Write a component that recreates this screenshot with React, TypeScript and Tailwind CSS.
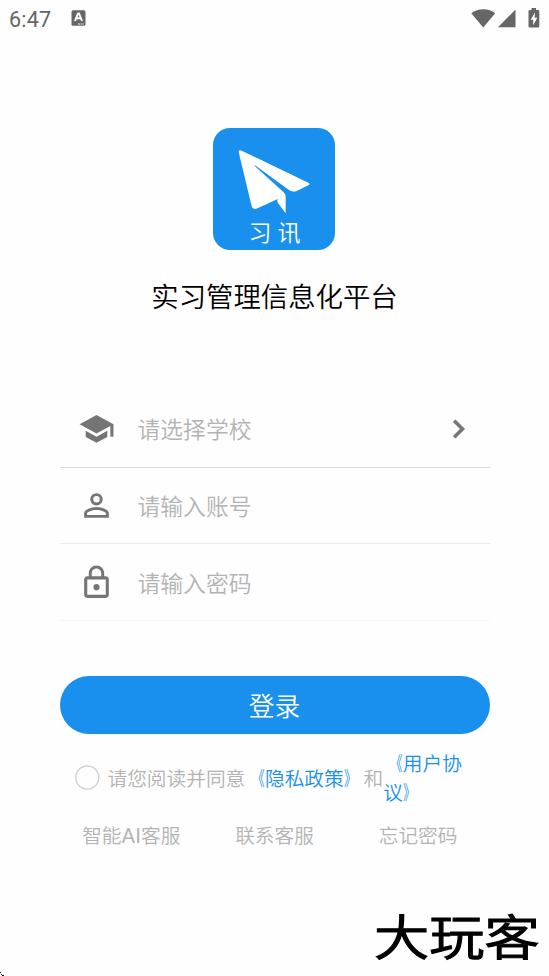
import type { ReactNode } from "react";

function StatusBar() {
  return (
    <header className="flex h-9 items-center pl-[9px] pr-[9px] text-[#666]">
      <span className="w-[62px] pt-[3px] font-['Roboto',sans-serif] text-[21.5px] font-normal leading-none tracking-[0.2px]">6:47</span>
      <svg className="h-4 w-[15px]" viewBox="0 0 15 16">
        <rect x="0.5" y="0.3" width="14" height="15.5" rx="1.6" fill="#666" />
        <path d="M4 11 7 3.5h1L11 11M5.3 8.3h4.4" fill="none" stroke="#fff" strokeWidth="1.9" />
        <path d="M7 14h6" stroke="#fff" strokeWidth="0.9" strokeDasharray="2 .6" />
      </svg>
      <div className="ml-auto flex items-center">
        <svg className="h-[20px] w-[25px]" viewBox="0 0 25 20" fill="#666">
          <path d="M.3 5.2C7-.1 18-.1 24.2 5.2L12.2 19.5Z" />
        </svg>
        <svg className="ml-[2px] h-[20px] w-[18px]" viewBox="0 0 18 20" fill="#666">
          <path d="M0 19.3 17.5 1.5v17.8Z" />
        </svg>
        <svg className="ml-[12px] h-[20px] w-[12px]" viewBox="0 0 12 20" fill="#666">
          <path d="M3.5 0h4.6v2H10a1.3 1.3 0 0 1 1.3 1.3v15A1.3 1.3 0 0 1 10 19.6H1.8a1.3 1.3 0 0 1-1.3-1.3v-15A1.3 1.3 0 0 1 1.8 2h1.7Z" />
          <path d="M7 4.6 2.7 11.8h2.5v5.4L9.3 9.8H6.7Z" fill="#fff" />
        </svg>
      </div>
    </header>
  );
}

function Logo() {
  return (
    <div className="relative ml-[213.4px] mt-[92px] h-[122px] w-[122px] rounded-[17px] bg-[#1990ee]">
      <svg className="h-[122px] w-[122px]" viewBox="28 24 366 366" fill="#fff">
        <path d="M105 96q0-8 9-4L314 188q7 4 0 8L279 213q-11 4-22-2L156 137q-6-4-2 2L240 217q6 6 6 15v48L223 249q-5-7 1-13L158 266q-11 4-14-7Z" />
      </svg>
      <div className="absolute inset-x-0 top-[92px] flex justify-center gap-[6px] text-[23px] leading-[23px] text-white">
        <span>习</span>
        <span>讯</span>
      </div>
    </div>
  );
}

function Field({ icon, text, border, trailing }: { icon: ReactNode; text: string; border: string; trailing?: ReactNode }) {
  return (
    <div className={`flex h-[76.7px] items-center border-b pl-[18px] pr-[13px] ${border}`}>
      <div className="flex w-[37px] justify-center">{icon}</div>
      <span className="ml-[23px] pt-[2px] text-[22.8px] leading-none text-[#b3b3b3]">{text}</span>
      <span className="ml-auto">{trailing}</span>
    </div>
  );
}

function Open() {
  return <span className="inline-block origin-right scale-x-[0.64]">《</span>;
}

function Close() {
  return <span className="inline-block origin-left scale-x-[0.64]">》</span>;
}

export default function App() {
  return (
    <main className="relative flex h-[976px] w-[549px] flex-col overflow-hidden bg-[#fefefe] font-['Noto_Sans_CJK_SC_DemiLight','Noto_Sans_CJK_SC',sans-serif] font-[350]">
      <StatusBar />
      <Logo />
      <h1 className="mt-[25px] text-center text-[27.4px] leading-10 text-black">实习管理信息化平台</h1>
      <form className="ml-[59.5px] mt-[76px] w-[430px]">
        <Field
          text="请选择学校"
          border="border-[#dadada]"
          icon={
            <svg className="h-[37px] w-[37px]" viewBox="0 -0.3 24 24" fill="#757575">
              <path d="M5 13.18v4L12 21l7-3.82v-4L12 17l-7-3.82zM12 3 1 9l11 6 9-4.91V17h2V9L12 3z" />
            </svg>
          }
          trailing={
            <svg className="h-[37px] w-[37px]" viewBox="0 -0.3 24 24" fill="#757575" stroke="#757575" strokeWidth="0.4">
              <path d="M10 6 8.59 7.41 13.17 12l-4.58 4.59L10 18l6-6z" />
            </svg>
          }
        />
        <Field
          text="请输入账号"
          border="border-[#ebebeb]"
          icon={
            <svg className="h-[37px] w-[37px]" viewBox="0 0 24 24" fill="#757575">
              <path d="M12 5.9a2.1 2.1 0 1 1 0 4.2 2.1 2.1 0 0 1 0-4.2m0 9c2.97 0 6.1 1.46 6.1 2.1v1.1H5.9V17c0-.64 3.13-2.1 6.1-2.1M12 4C9.79 4 8 5.79 8 8s1.79 4 4 4 4-1.79 4-4-1.79-4-4-4zm0 9c-2.67 0-8 1.34-8 4v3h16v-3c0-2.66-5.33-4-8-4z" />
            </svg>
          }
        />
        <Field
          text="请输入密码"
          border="border-[#f4f4f4]"
          icon={
            <svg className="h-[37px] w-[37px]" viewBox="0 0 24 24" fill="#757575">
              <path d="M12 17a2 2 0 1 0 0-4 2 2 0 0 0 0 4zm6-9h-1V6c0-2.76-2.24-5-5-5S7 3.24 7 6v2H6c-1.1 0-2 .9-2 2v10c0 1.1.9 2 2 2h12c1.1 0 2-.9 2-2V10c0-1.1-.9-2-2-2zM8.9 6c0-1.71 1.39-3.1 3.1-3.1s3.1 1.39 3.1 3.1v2H8.9V6zM18 20H6V10h12v10z" />
            </svg>
          }
        />
        <button type="button" className="mt-[55px] flex h-[58px] w-full items-center justify-center rounded-full bg-[#1990ee] text-[25.7px] leading-none text-white">
          登录
        </button>
        <div className="mt-[14px] flex h-[58px] items-center pl-[15px] text-[19.7px] leading-[29px] text-[#b3b3b3]">
          <svg className="h-[25px] w-[25px] shrink-0" viewBox="0 0 25 25">
            <circle cx="12.3" cy="12.5" r="11.5" fill="none" stroke="#d0d0d0" strokeWidth="1.4" />
          </svg>
          <span className="ml-[8px] whitespace-nowrap">请您阅读并同意</span>
          <a className="whitespace-nowrap text-[#1990ee]"><Open />隐私政策<Close /></a>
          <span>和</span>
          <a className="w-[85px] text-[#1990ee]"><Open />用户协<br />议<Close /></a>
        </div>
        <nav className="mt-[14px] flex justify-between pl-[22.7px] pr-[32px] text-[19.7px] leading-[29px] text-[#b3b3b3]">
          <a>智能<span className="font-['Roboto'] text-[21px] font-normal">AI</span>客服</a>
          <a className="-ml-[10px]">联系客服</a>
          <a>忘记密码</a>
        </nav>
      </form>
      <div className="absolute left-[374px] top-[905px] origin-left scale-x-[1.15] whitespace-nowrap text-[48px] font-medium leading-[58px] text-black [-webkit-text-stroke:1.1px_black] [stroke-linejoin:round]">大玩客</div>
      <svg className="absolute bottom-0 left-0 h-1 w-1" viewBox="0 0 4 4">
        <path d="M0 0h1v1H0zM1 2h1v1H1zM2 3h2v1H2z" />
      </svg>
    </main>
  );
}
